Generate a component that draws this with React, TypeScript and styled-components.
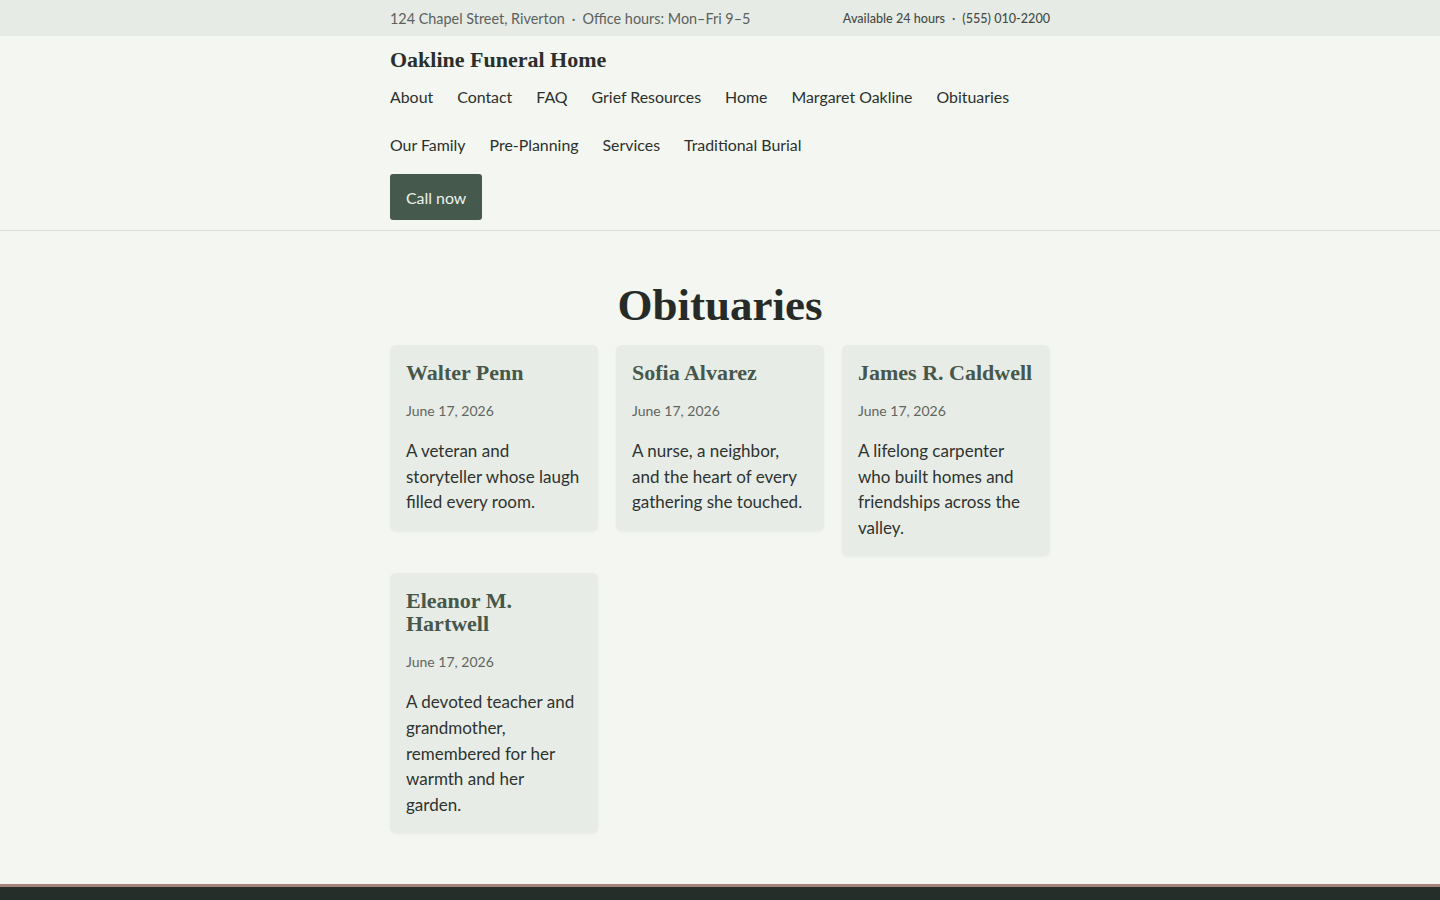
import styled, { createGlobalStyle } from "styled-components";

const GlobalStyle = createGlobalStyle`
    * { box-sizing: border-box; }
    body {
        margin: 0;
        background: #f3f6f1;
        color: #2a302b;
        font-family: "Lato", "Noto Sans", sans-serif;
    }
`;

const Wrap = styled.div`
    width: 660px;
    margin: 0 auto;
`;

const TopBar = styled.div`
    background: #e7ebe6;
    height: 36px;
    ${Wrap} {
        height: 100%;
        display: flex;
        align-items: center;
        justify-content: space-between;
    }
`;

const TopText = styled.span<{ $small?: boolean }>`
    font-size: ${p => (p.$small ? "12.6px" : "14.4px")};
    font-weight: ${p => (p.$small ? 500 : 400)};
    color: ${p => (p.$small ? "#454c47" : "#5b625d")};
    .dot { margin: 0 7px; }
`;

const Header = styled.header`
    border-bottom: 1px solid #dcdfdb;
    padding: 12px 0 10px;
`;

const Brand = styled.div`
    font-family: "Liberation Serif", "DejaVu Serif", serif;
    font-weight: 700;
    font-size: 22px;
    line-height: 24px;
    color: #2a2f2b;
`;

const Nav = styled.nav`
    display: flex;
    flex-wrap: wrap;
    column-gap: 24px;
    margin-top: 1px;
`;

const NavLink = styled.a`
    display: block;
    padding: 12px 0;
    line-height: 24px;
    font-size: 15.9px;
    color: #2b302c;
    text-decoration: none;
`;

const CallButton = styled.a`
    display: inline-flex;
    align-items: center;
    height: 46px;
    margin-top: 5px;
    padding: 0 16px;
    border-radius: 3px;
    background: #45594c;
    color: #eef2ec;
    font-size: 15.9px;
    text-decoration: none;
`;

const Main = styled.main`
    padding: 48px 0 51px;
`;

const Title = styled.h1`
    margin: 0 0 13px;
    text-align: center;
    font-family: "Liberation Serif", "DejaVu Serif", serif;
    font-weight: 700;
    font-size: 45px;
    line-height: 53px;
    color: #262b27;
`;

const Grid = styled.div`
    display: grid;
    grid-template-columns: repeat(3, 1fr);
    column-gap: 18px;
    row-gap: 17px;
    align-items: start;
`;

const Card = styled.article`
    background: #e8ece7;
    border-radius: 6px;
    padding: 16px;
    box-shadow: 0 1px 3px rgba(40, 50, 42, 0.05);
`;

const CardName = styled.h2`
    margin: 0;
    font-family: "Liberation Serif", "DejaVu Serif", serif;
    font-weight: 700;
    font-size: 22px;
    line-height: 23px;
    color: #46574b;
`;

const CardDate = styled.div`
    margin-top: 16px;
    font-size: 14px;
    line-height: 21px;
    color: #5f6660;
`;

const CardText = styled.p`
    margin: 17px 0 0;
    font-size: 17px;
    line-height: 25.6px;
    color: #2e332f;
`;

const Footer = styled.footer`
    border-top: 3px solid #a5837c;
    background: #262e29;
    height: 60px;
`;

const links = [
    "About", "Contact", "FAQ", "Grief Resources", "Home", "Margaret Oakline",
    "Obituaries", "Our Family", "Pre-Planning", "Services", "Traditional Burial",
];

const obituaries = [
    { name: "Walter Penn", text: "A veteran and storyteller whose laugh filled every room." },
    { name: "Sofia Alvarez", text: "A nurse, a neighbor, and the heart of every gathering she touched." },
    { name: "James R. Caldwell", text: "A lifelong carpenter who built homes and friendships across the valley." },
    { name: "Eleanor M. Hartwell", text: "A devoted teacher and grandmother, remembered for her warmth and her garden." },
];

export default function App() {
    return (
        <>
            <GlobalStyle />
            <TopBar>
                <Wrap>
                    <TopText>124 Chapel Street, Riverton<span className="dot">·</span>Office hours: Mon–Fri 9–5</TopText>
                    <TopText $small>Available 24 hours<span className="dot">·</span>(555) 010-2200</TopText>
                </Wrap>
            </TopBar>
            <Header>
                <Wrap>
                    <Brand>Oakline Funeral Home</Brand>
                    <Nav>
                        {links.map(l => <NavLink key={l} href="#">{l}</NavLink>)}
                    </Nav>
                    <CallButton href="#">Call now</CallButton>
                </Wrap>
            </Header>
            <Main>
                <Wrap>
                    <Title>Obituaries</Title>
                    <Grid>
                        {obituaries.map(o => (
                            <Card key={o.name}>
                                <CardName>{o.name}</CardName>
                                <CardDate>June 17, 2026</CardDate>
                                <CardText>{o.text}</CardText>
                            </Card>
                        ))}
                    </Grid>
                </Wrap>
            </Main>
            <Footer />
        </>
    );
}
